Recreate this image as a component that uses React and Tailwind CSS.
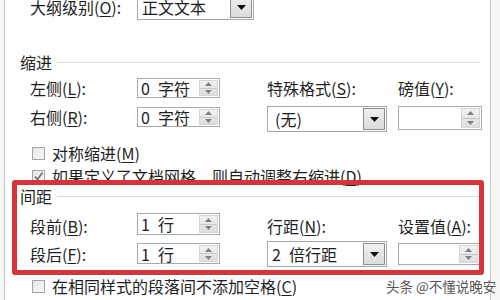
import React from "react";

const K = ({ t, k }) => (
  <span className="whitespace-nowrap">
    {t}(<span className="underline underline-offset-2">{k}</span>):
  </span>
);

const Tri = ({ up, cls }) => (
  <svg width="7" height="4" viewBox="0 0 7 4" className={cls}>
    {up ? <path d="M0 4 L3.5 0 L7 4 Z" fill="#7c7f90" /> : <path d="M0 0 L3.5 4 L7 0 Z" fill="#7c7f90" />}
  </svg>
);

const Spin = ({ value, w = "w-[83px]", h = "h-[20px]" }) => (
  <div className={`${w} ${h} border border-[#aaaaaa] bg-white flex items-stretch shrink-0`}>
    <span className="flex-1 pl-[3px] flex items-center text-[16px] leading-none text-[#1e1e1e] whitespace-pre">{value}</span>
    <div className="w-[19px] my-[1px] mr-[1px] flex flex-col border border-[#d6d6d6] bg-gradient-to-b from-[#f2f2f2] to-[#dedede]">
      <div className="flex-1 flex items-center justify-center border-b border-[#c8c8c8]">
        <Tri up />
      </div>
      <div className="flex-1 flex items-center justify-center">
        <Tri />
      </div>
    </div>
  </div>
);

const Drop = ({ value, w = "w-[120px]", h = "h-[26px]", pl = "pl-[7px]" }) => (
  <div className={`${w} ${h} border border-[#a8a8a8] bg-white flex items-stretch shrink-0`}>
    <span className={`flex-1 ${pl} flex items-center text-[16px] leading-none text-[#1e1e1e] whitespace-pre`}>{value}</span>
    <div className="w-[22px] m-[1px] border border-[#8c8c8c] bg-gradient-to-b from-[#efefef] to-[#dcdcdc] flex items-center justify-center">
      <svg width="9" height="5" viewBox="0 0 9 5">
        <path d="M0 0 L4.5 5 L9 0 Z" fill="#111" />
      </svg>
    </div>
  </div>
);

const Check = ({ checked, children }) => (
  <div className="flex items-center h-[16px] pl-[27px] gap-[7px]">
    <div className="w-[13px] h-[13px] border border-[#a4a4a4] bg-gradient-to-br from-[#e6e6e6] to-[#f8f8f8] flex items-center justify-center shrink-0">
      {checked && (
        <svg width="11" height="11" viewBox="0 0 11 11">
          <path d="M2 5.5 L4.5 8.5 L9.5 1.5" stroke="#6a6a6a" strokeWidth="1.6" fill="none" />
        </svg>
      )}
    </div>
    <span className="text-[16px] leading-none text-[#1e1e1e] whitespace-nowrap">{children}</span>
  </div>
);

const Header = ({ title }) => (
  <div className="flex items-center h-[16px] pl-[15px]">
    <span className="text-[16px] leading-none text-[#1e1e1e]">{title}</span>
    <div className="flex-1 h-px bg-[#dcdcdc] ml-[5px] mr-[10px]" />
  </div>
);

export default function App() {
  return (
    <div
      className="w-[500px] h-[300px] overflow-hidden bg-[#f6f6f6] relative"
      style={{ fontFamily: '"Noto Sans CJK SC", "Noto Sans", sans-serif' }}
    >
      <div className="ml-[4px] w-[487px] h-full bg-white border-l border-r border-[#c4c4c4] flex flex-col text-[16px] text-[#1e1e1e]">
        {/* row 1 */}
        <div className="mt-[-6px] h-[26px] flex items-center pl-[25px] shrink-0">
          <div className="w-[107px] leading-none">
            <K t="大纲级别" k="O" />
          </div>
          <Drop value="正文文本" w="w-[117px]" pl="pl-[4px]" />
        </div>

        <div className="mt-[34px] shrink-0">
          <Header title="缩进" />
        </div>

        {/* labels row */}
        <div className="mt-[8px] h-[20px] flex items-center pl-[25px] shrink-0">
          <div className="w-[107px] leading-none">
            <K t="左侧" k="L" />
          </div>
          <Spin value={"0\u2002字符"} />
          <div className="w-[47px]" />
          <div className="w-[131px] leading-none">
            <K t="特殊格式" k="S" />
          </div>
          <div className="leading-none">
            <K t="磅值" k="Y" />
          </div>
        </div>

        {/* second row */}
        <div className="mt-[8px] h-[26px] flex items-start pl-[25px] shrink-0">
          <div className="w-[107px] h-[22px] flex items-center leading-none">
            <K t="右侧" k="R" />
          </div>
          <div className="mt-[1px]">
            <Spin value={"0\u2002字符"} />
          </div>
          <div className="w-[47px]" />
          <Drop value="(无)" />
          <div className="w-[11px]" />
          <Spin value="" w="w-[84px]" h="h-[24px]" />
        </div>

        <div className="mt-[13px] shrink-0">
          <Check>
            对称缩进(<span className="underline underline-offset-2">M</span>)
          </Check>
        </div>
        <div className="mt-[7px] shrink-0">
          <Check checked>
            如果定义了文档网格，则自动调整右缩进(<span className="underline underline-offset-2">D</span>)
          </Check>
        </div>

        <div className="mt-[4px] shrink-0">
          <Header title="间距" />
        </div>

        {/* spacing labels row */}
        <div className="mt-[9px] h-[22px] flex items-center pl-[25px] shrink-0">
          <div className="w-[107px] leading-none pt-[4px]">
            <K t="段前" k="B" />
          </div>
          <Spin value={"1\u2002行"} h="h-[22px]" />
          <div className="w-[47px]" />
          <div className="w-[131px] leading-none pt-[3px]">
            <K t="行距" k="N" />
          </div>
          <div className="leading-none pt-[3px]">
            <K t="设置值" k="A" />
          </div>
        </div>

        {/* spacing second row */}
        <div className="mt-[6px] h-[26px] flex items-start pl-[25px] shrink-0">
          <div className="w-[107px] h-[26px] flex items-center leading-none">
            <K t="段后" k="F" />
          </div>
          <div className="mt-[2px]">
            <Spin value={"1\u2002行"} h="h-[21px]" />
          </div>
          <div className="w-[47px]" />
          <Drop value={"2\u2002倍行距"} pl="pl-[4px]" />
          <div className="w-[11px]" />
          <div className="mt-[2px]">
            <Spin value="" w="w-[82px]" h="h-[22px]" />
          </div>
        </div>

        <div className="mt-[11px] shrink-0">
          <Check>
            在相同样式的段落间不添加空格(<span className="underline underline-offset-2">C</span>)
          </Check>
        </div>
        <div className="mt-[5px] shrink-0">
          <Check>
            如果定义了文档网格，则对齐到网格(<span className="underline underline-offset-2">W</span>)
          </Check>
        </div>
      </div>

      {/* red annotation box */}
      <div className="absolute left-[12px] top-[180px] w-[472px] h-[95px] border-[5px] border-[#d5343a] rounded-[3px] pointer-events-none" />

      {/* watermark */}
      <div className="absolute left-[386px] top-[280px] text-[13.5px] leading-none text-[#555] whitespace-nowrap [text-shadow:0_0_2px_#fff,0_0_2px_#fff]">
        头条 @不懂说晚安
      </div>
    </div>
  );
}
